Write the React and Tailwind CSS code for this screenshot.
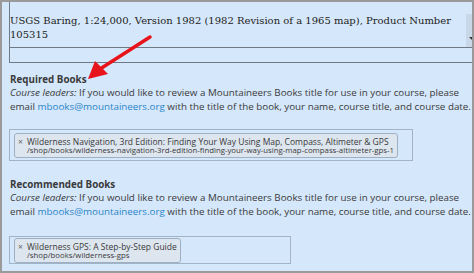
export default function App() {
  const sans = { fontFamily: '"Open Sans", "DejaVu Sans", sans-serif' };
  return (
    <div className="relative w-[474px] h-[273px] overflow-hidden border-2 border-[#9a9a9a] bg-[#d5e7fa] text-[#3a3a3a]" style={sans}>
      {/* top select/textarea, scrolled so its top edge is hidden */}
      <div className="ml-[7px] -mr-[4px]">
        <div className="relative h-[46px] border-l border-b border-[#6f7a86] pt-[12px] font-['DejaVu_Serif',serif] text-[10px] leading-[14px] whitespace-nowrap text-[#222]">
          <p>USGS Baring, 1:24,000, Version 1982 (1982 Revision of a 1965 map), Product Number</p>
          <p>105315</p>
          <div className="absolute right-0 top-[12px] bottom-0 w-[10px] bg-[#c9d8e8]">
            <span className="absolute left-[3px] bottom-[7px] h-0 w-0 border-x-[3px] border-t-[3px] border-x-transparent border-t-[#333]" />
          </div>
        </div>
        <div className="h-[15px] border-l border-b border-[#6f7a86]" />
      </div>

      <div className="px-[8px] pt-[10px]">
        <h3 className="text-[9.8px] font-bold leading-[13px]">Required Books</h3>
        <p className="text-[9.8px] leading-[14px] whitespace-nowrap">
          <em>Course leaders:</em> If you would like to review a Mountaineers Books title for use in your course, please
          <br />
          email <span className="text-[#2b86c9]">mbooks@mountaineers.org</span> with the title of the book, your name, course title, and course date.
        </p>

        <div className="-ml-[1px] mt-[15px] flex w-[404px] border border-[#a3b3c6] px-[4px] pt-[3px] pb-[2px]">
          <div className="flex items-start gap-[4px] rounded-[3px] border border-[#9fb0c4] bg-[#dde5ef] px-[3px] pt-[3px] pb-[2px] whitespace-nowrap">
            <span className="text-[8.5px] leading-[9px] text-[#666]">×</span>
            <div>
              <p className="text-[8.5px] leading-[9px]">Wilderness Navigation, 3rd Edition: Finding Your Way Using Map, Compass, Altimeter &amp; GPS</p>
              <p className="text-[7.8px] leading-[9px]">/shop/books/wilderness-navigation-3rd-edition-finding-your-way-using-map-compass-altimeter-gps-1</p>
            </div>
          </div>
        </div>

        <h3 className="mt-[17px] text-[9.8px] font-bold leading-[13px]">Recommended Books</h3>
        <p className="text-[9.8px] leading-[14px] whitespace-nowrap">
          <em>Course leaders:</em> If you would like to review a Mountaineers Books title for use in your course, please
          <br />
          email <span className="text-[#2b86c9]">mbooks@mountaineers.org</span> with the title of the book, your name, course title, and course date.
        </p>

        <div className="-ml-[1px] mt-[17px] flex w-[282px] border border-[#a3b3c6] px-[4px] pt-[1px]">
          <div className="flex items-start gap-[4px] rounded-[3px] border border-[#9fb0c4] bg-[#dde5ef] px-[3px] pt-[3px] pb-[2px] whitespace-nowrap">
            <span className="text-[8.5px] leading-[9px] text-[#666]">×</span>
            <div>
              <p className="text-[8.5px] leading-[9px]">Wilderness GPS: A Step-by-Step Guide</p>
              <p className="text-[7.8px] leading-[9px]">/shop/books/wilderness-gps</p>
            </div>
          </div>
        </div>
      </div>

      {/* red annotation arrow */}
      <svg className="absolute left-0 top-0" width="474" height="273" viewBox="0 0 474 273">
        <line x1="148" y1="35" x2="98" y2="67" stroke="#e8141b" strokeWidth="3.5" strokeLinecap="round" />
        <polygon points="86,77 93,59 106,72" fill="#e8141b" />
      </svg>
    </div>
  );
}
